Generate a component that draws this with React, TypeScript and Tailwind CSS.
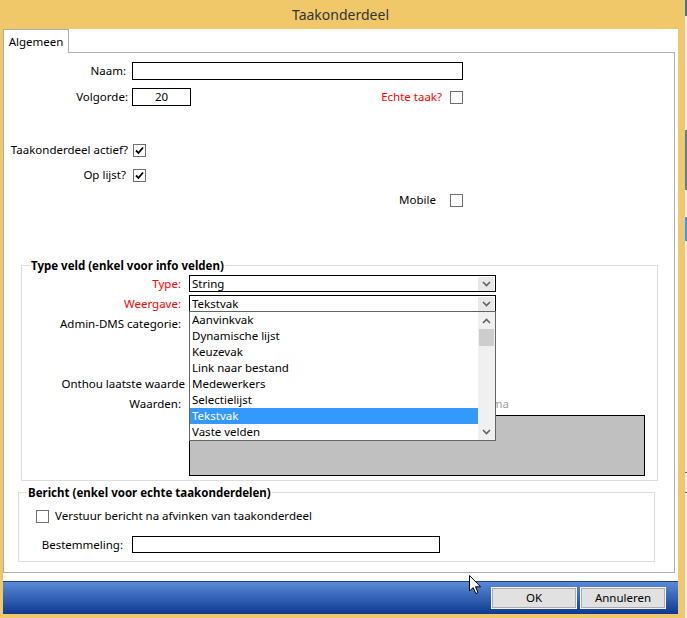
import React from 'react';

// Windows-style "Taakonderdeel" dialog

const FONT = "font-['Noto_Sans','Segoe_UI',sans-serif]";

const Check = ({ checked = false }: { checked?: boolean }) => (
  <div className="w-[13px] h-[13px] border border-[#707070] bg-white flex items-center justify-center shrink-0">
    {checked && (
      <svg width="9" height="9" viewBox="0 0 9 9">
        <path d="M1 4.5 L3.5 7 L8 1.5" fill="none" stroke="#000" strokeWidth="1.8" />
      </svg>
    )}
  </div>
);

const Chevron = ({ up = false }: { up?: boolean }) => (
  <svg width="9" height="6" viewBox="0 0 9 6">
    <path
      d={up ? 'M1 5 L4.5 1.5 L8 5' : 'M1 1 L4.5 4.5 L8 1'}
      fill="none"
      stroke="#606060"
      strokeWidth="1.6"
    />
  </svg>
);

const SelectBox = ({ value }: { value: string }) => (
  <div className="w-[307px] h-[17px] border border-black bg-white flex items-center">
    <span className="flex-1 pl-[2px] leading-none">{value}</span>
    <div className="w-[16px] h-[14px] mr-px bg-[#e8e8e8] flex items-center justify-center">
      <Chevron />
    </div>
  </div>
);

const options = [
  'Aanvinkvak',
  'Dynamische lijst',
  'Keuzevak',
  'Link naar bestand',
  'Medewerkers',
  'Selectielijst',
  'Tekstvak',
  'Vaste velden',
];

const DropList = () => (
  <div className="absolute left-0 top-[16px] w-[307px] h-[130px] border border-[#646464] bg-white flex z-10">
    <div className="flex-1 flex flex-col">
      {options.map(o => (
        <div
          key={o}
          className={
            'h-[16px] flex items-center pl-[2px] ' +
            (o === 'Tekstvak' ? 'bg-[#3399ff] text-white' : 'text-black')
          }
        >
          {o}
        </div>
      ))}
    </div>
    <div className="w-[17px] bg-[#f0f0f0] flex flex-col items-center">
      <div className="h-[17px] flex items-center justify-center">
        <Chevron up />
      </div>
      <div className="w-[15px] h-[17px] bg-[#cdcdcd]" />
      <div className="flex-1" />
      <div className="h-[16px] flex items-center justify-center">
        <Chevron />
      </div>
    </div>
  </div>
);

const GroupBox = ({
  title,
  className,
  children,
}: {
  title: string;
  className: string;
  children: React.ReactNode;
}) => (
  <div className={'border border-[#dcdcdc] flex flex-col ' + className}>
    <div className="-mt-[8px] ml-[8px] px-px bg-white w-fit h-[16px] leading-[16px] font-bold">
      {title}
    </div>
    {children}
  </div>
);

export default function App() {
  return (
    <div className={`relative w-[687px] h-[618px] flex overflow-hidden text-[11.5px] text-black ${FONT}`}>
      {/* window frame */}
      <div className="w-[685px] h-full bg-[#f0c86a] flex flex-col pl-[3px] pr-[7px] pb-[4px]">
        <div className="h-[29px] flex items-center justify-center text-[14px] text-[#333]">
          Taakonderdeel
        </div>

        <div className="bg-white h-[552px] flex flex-col">
          {/* tab header */}
          <div className="h-[23px] flex">
            <div className="relative z-[1] w-[66px] h-[24px] border border-b-0 border-[#adadad] bg-white flex items-center justify-center">
              Algemeen
            </div>
          </div>

          {/* tab page */}
          <div className="h-[521px] mr-[3px] border border-[#adadad] flex flex-col">
            <div className="mt-[9px] h-[18px] flex items-center">
              <div className="w-[122px] text-right">Naam:</div>
              <div className="ml-[6px] w-[331px] h-[18px] border border-black" />
            </div>

            <div className="mt-[8px] h-[18px] flex items-center">
              <div className="w-[124px] text-right">Volgorde:</div>
              <div className="ml-[4px] w-[59px] h-[18px] border border-black flex items-center justify-center">
                20
              </div>
              <div className="w-[251px] text-right text-[#ff0000]">Echte taak?</div>
              <div className="ml-[8px]">
                <Check />
              </div>
            </div>

            <div className="mt-[35px] h-[18px] flex items-center">
              <div className="w-[124px] text-right">Taakonderdeel actief?</div>
              <div className="ml-[5px]">
                <Check checked />
              </div>
            </div>

            <div className="mt-[7px] h-[18px] flex items-center">
              <div className="w-[122px] text-right">Op lijst?</div>
              <div className="ml-[7px]">
                <Check checked />
              </div>
            </div>

            <div className="mt-[7px] h-[18px] flex items-center">
              <div className="w-[432px] text-right">Mobile</div>
              <div className="ml-[14px]">
                <Check />
              </div>
            </div>

            {/* type veld */}
            <GroupBox
              title="Type veld (enkel voor info velden)"
              className="mt-[56px] ml-[17px] w-[637px] h-[216px]"
            >
              <div className="mt-px h-[17px] flex items-center">
                <div className="w-[159px] text-right text-[#ff0000]">Type:</div>
                <div className="ml-[8px]">
                  <SelectBox value="String" />
                </div>
              </div>
              <div className="mt-[3px] h-[17px] flex items-center">
                <div className="w-[159px] text-right text-[#ff0000]">Weergave:</div>
                <div className="relative ml-[8px]">
                  <SelectBox value="Tekstvak" />
                  <DropList />
                </div>
              </div>
              <div className="mt-[4px] h-[16px] flex items-center">
                <div className="w-[159px] text-right">Admin-DMS categorie:</div>
              </div>
              <div className="mt-[44px] h-[16px] flex items-center">
                <div className="w-[163px] text-right whitespace-nowrap">Onthou laatste waarde</div>
              </div>
              <div className="mt-[4px] h-[16px] flex items-center">
                <div className="w-[159px] text-right">Waarden:</div>
                <div className="ml-[8px] w-[320px] text-right text-[#a0a0a0] whitespace-nowrap">
                  gescheiden door een komma
                </div>
              </div>
              <div className="mt-[3px] ml-[167px] w-[456px] h-[61px] border border-black bg-[#c0c0c0]" />
            </GroupBox>

            {/* bericht */}
            <GroupBox
              title="Bericht (enkel voor echte taakonderdelen)"
              className="mt-[11px] ml-[14px] w-[637px] h-[70px]"
            >
              <div className="mt-[7px] h-[16px] flex items-center">
                <div className="ml-[17px]">
                  <Check />
                </div>
                <div className="ml-[6px]">Verstuur bericht na afvinken van taakonderdeel</div>
              </div>
              <div className="mt-[12px] h-[17px] flex items-center">
                <div className="w-[104px] text-right">Bestemmeling:</div>
                <div className="ml-[9px] w-[308px] h-[17px] border border-black" />
              </div>
            </GroupBox>
          </div>
        </div>

        {/* button bar */}
        <div className="h-[33px] border-t border-[#1b3f8f] bg-gradient-to-b from-[#5a8ad8] to-[#0d3a91] flex justify-end items-start pt-[5px] pr-[12px] gap-[3px]">
          <button className="w-[86px] h-[22px] border border-[#f4f4f4] bg-[#e1e1e1] outline outline-1 outline-[#adadad] -outline-offset-2 text-black">
            OK
          </button>
          <button className="w-[86px] h-[22px] border border-[#f4f4f4] bg-[#e1e1e1] outline outline-1 outline-[#adadad] -outline-offset-2 text-black">
            Annuleren
          </button>
        </div>
      </div>

      {/* sliver of the window behind */}
      <div className="w-[2px] h-full bg-[#ececec] flex flex-col">
        <div className="h-[16px] bg-[#4d6f99]" />
        <div className="h-[114px]" />
        <div className="h-[60px] bg-[#5d7f9f]" />
        <div className="h-[27px]" />
        <div className="h-[24px] bg-[#3399ff]" />
        <div className="h-[231px]" />
        <div className="h-px bg-[#3d6fb0]" />
        <div className="h-[19px]" />
        <div className="h-px bg-[#3d6fb0]" />
      </div>

      {/* mouse pointer */}
      <svg className="absolute left-[469px] top-[575px]" width="13" height="20" viewBox="0 0 13 20">
        <path
          d="M0.5 0.5 L0.5 16 L4.2 12.6 L6.8 18.6 L9 17.6 L6.5 11.8 L11.6 11.8 Z"
          fill="#fff"
          stroke="#000"
          strokeWidth="1"
          strokeLinejoin="round"
        />
      </svg>
    </div>
  );
}
